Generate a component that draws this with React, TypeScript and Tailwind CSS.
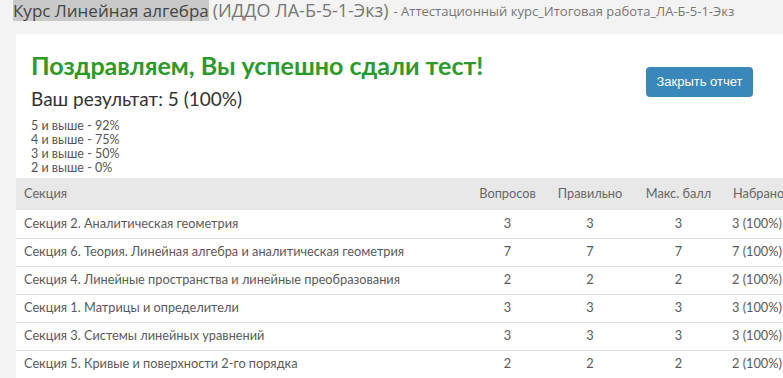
import React from "react";

const rows = [
  { name: "Секция 2. Аналитическая геометрия", q: 3 },
  { name: "Секция 6. Теория. Линейная алгебра и аналитическая геометрия", q: 7 },
  { name: "Секция 4. Линейные пространства и линейные преобразования", q: 2 },
  { name: "Секция 1. Матрицы и определители", q: 3 },
  { name: "Секция 3. Системы линейных уравнений", q: 3 },
  { name: "Секция 5. Кривые и поверхности 2-го порядка", q: 2 },
];

const grades = ["5 и выше - 92%", "4 и выше - 75%", "3 и выше - 50%", "2 и выше - 0%"];

export default function App() {
  return (
    <div className="h-[378px] w-[783px] overflow-hidden bg-[#f3f3f3] font-['Open_Sans',sans-serif] text-[#555]">
      <div className="flex h-[34px] items-start whitespace-nowrap pl-[13px]">
        <span className="bg-[#c9c9c9] text-[17px] leading-[21px] text-[#444]">Курс Линейная алгебра</span>
        <span className="ml-[4px] text-[18px] leading-[21px] text-[#777]">(ИДДО ЛА-Б-5-1-Экз)</span>
        <span className="ml-[5px] pt-[4px] text-[13px] leading-[15px] text-[#777]">- Аттестационный курс_Итоговая работа_ЛА-Б-5-1-Экз</span>
      </div>
      <div className="ml-[16px] w-[820px] bg-white">
        <div className="flex items-start justify-between pl-[15px] pt-[15px]">
          <div className="font-['Lato',sans-serif]">
            <h1 className="text-[25px] font-bold leading-[32px] text-[#2a9a2a]">Поздравляем, Вы успешно сдали тест!</h1>
            <p className="mt-[7px] text-[19px] leading-[22px] text-[#333]">Ваш результат: 5 (100%)</p>
            <div className="mt-[9px] text-[12.5px] leading-[14px] text-[#555]">
              {grades.map((g) => (
                <div key={g}>{g}</div>
              ))}
            </div>
          </div>
          <button className="mr-[83px] mt-[18px] h-[30px] w-[107px] rounded-[4px] bg-[#3a87b9] font-['Liberation_Sans',sans-serif] text-[13px] text-white">
            Закрыть отчет
          </button>
        </div>
        <table className="mt-[3px] w-[820px] table-fixed border-collapse font-['Lato',sans-serif] text-[12.75px] text-[#5a5a5a]">
          <colgroup>
            <col className="w-[454px]" />
            <col className="w-[75px]" />
            <col className="w-[90px]" />
            <col className="w-[87px]" />
            <col className="w-[114px]" />
          </colgroup>
          <thead>
            <tr className="h-[32px] bg-[#e8e8e8] text-[#666]">
              <th className="pl-[8px] text-left font-normal">Секция</th>
              <th className="text-center font-normal">Вопросов</th>
              <th className="text-center font-normal">Правильно</th>
              <th className="text-center font-normal">Макс. балл</th>
              <th className="pl-[11px] text-left font-normal">Набрано</th>
            </tr>
          </thead>
          <tbody>
            {rows.map((r) => (
              <tr key={r.name} className="h-[28px] border-b border-[#dcdcdc]">
                <td className="whitespace-nowrap pl-[8px]">{r.name}</td>
                <td className="text-center">{r.q}</td>
                <td className="text-center">{r.q}</td>
                <td className="text-center">{r.q}</td>
                <td className="whitespace-nowrap pl-[10px]">{r.q} (100%)</td>
              </tr>
            ))}
          </tbody>
        </table>
      </div>
    </div>
  );
}
